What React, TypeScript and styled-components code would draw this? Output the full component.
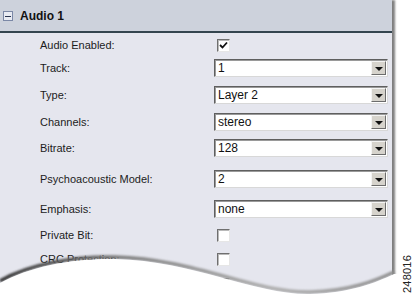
import React from 'react';
import styled, { createGlobalStyle } from 'styled-components';

const GlobalStyle = createGlobalStyle`
  html, body {
    margin: 0;
    padding: 0;
    background: #ffffff;
    font-family: 'Liberation Sans', Arial, sans-serif;
  }
`;

const Page = styled.div`
  position: relative;
  width: 413px;
  height: 297px;
  overflow: hidden;
  background: #ffffff;
`;

const Panel = styled.section`
  width: 392px;
  height: 297px;
  background: #e5e6ee;
  box-shadow: 3px 0 2px rgba(0, 0, 0, 0.5);
`;

const Header = styled.header`
  display: flex;
  align-items: center;
  gap: 7px;
  height: 31px;
  padding: 0 0 0 3px;
  background: #cdd2dc;
  border-bottom: 2px solid #34454f;
  box-sizing: content-box;
`;

const Toggle = styled.span`
  display: flex;
  align-items: center;
  justify-content: center;
  width: 8px;
  height: 8px;
  border: 1px solid #7b88a6;
  background: #e8ebf3;
  margin-top: 1px;

  &::before {
    content: '';
    width: 6px;
    height: 1px;
    background: #2a3550;
  }
`;

const Title = styled.h2`
  margin: 0;
  font-size: 12px;
  font-weight: bold;
  color: #111;
`;

const Fields = styled.div`
  display: flex;
  flex-direction: column;
`;

const Row = styled.div<{ $h: number }>`
  display: grid;
  grid-template-columns: 174px 174px;
  align-items: center;
  height: ${(p) => p.$h}px;
  padding-left: 40px;
`;

const Label = styled.span`
  font-size: 11px;
  color: #1c1c1c;
  white-space: nowrap;
`;

const Box = styled.span`
  display: flex;
  align-items: center;
  justify-content: center;
  width: 11px;
  height: 11px;
  margin-left: 3px;
  background: #ffffff;
  border-style: solid;
  border-width: 1px;
  border-color: #6f6f6f #e6e6e6 #e6e6e6 #6f6f6f;
  box-shadow: inset 1px 1px 0 #b9b9b9;
`;

const Select = styled.div`
  display: flex;
  align-items: stretch;
  width: 174px;
  height: 18px;
  box-sizing: border-box;
  background: #ffffff;
  border-style: solid;
  border-width: 1px;
  border-color: #5f5f5f #d8d8d8 #d8d8d8 #5f5f5f;
  box-shadow: inset 1px 1px 0 #9a9a9a;
`;

const Value = styled.span`
  flex: 1;
  display: flex;
  align-items: center;
  padding-left: 3px;
  font-size: 12px;
  color: #111;
`;

const Arrow = styled.span`
  display: flex;
  align-items: center;
  justify-content: center;
  width: 15px;
  margin: 1px 1px 1px 0;
  background: #d6d3cc;
  border-style: solid;
  border-width: 1px;
  border-color: #f4f4f4 #6c6c6c #6c6c6c #f4f4f4;
  box-sizing: border-box;

  &::before {
    content: '';
    border-left: 4px solid transparent;
    border-right: 4px solid transparent;
    border-top: 4px solid #111;
    margin-top: 1px;
  }
`;

const Tear = styled.svg`
  position: absolute;
  left: 0;
  bottom: 0;
`;

const FigureId = styled.span`
  position: absolute;
  left: 388px;
  top: 268px;
  font-size: 11px;
  color: #222;
  transform: rotate(-90deg);
  letter-spacing: 0.2px;
`;

type Field =
  | { label: string; h: number; kind: 'check'; checked?: boolean }
  | { label: string; h: number; kind: 'select'; value: string };

const fields: Field[] = [
  { label: 'Audio Enabled:', h: 24, kind: 'check', checked: true },
  { label: 'Track:', h: 22, kind: 'select', value: '1' },
  { label: 'Type:', h: 32, kind: 'select', value: 'Layer 2' },
  { label: 'Channels:', h: 22, kind: 'select', value: 'stereo' },
  { label: 'Bitrate:', h: 30, kind: 'select', value: '128' },
  { label: 'Psychoacoustic Model:', h: 32, kind: 'select', value: '2' },
  { label: 'Emphasis:', h: 28, kind: 'select', value: 'none' },
  { label: 'Private Bit:', h: 24, kind: 'check' },
  { label: 'CRC Protection:', h: 24, kind: 'check' },
  { label: 'Original:', h: 26, kind: 'check' },
];

const Check = () => (
  <svg width="9" height="9" viewBox="0 0 9 9">
    <path d="M1 4 L3.5 6.5 L8 1.5" fill="none" stroke="#111" strokeWidth="1.8" />
  </svg>
);

const App: React.FC = () => (
  <>
    <GlobalStyle />
    <Page>
      <Panel>
        <Header>
          <Toggle />
          <Title>Audio 1</Title>
        </Header>
        <Fields>
          {fields.map((f) => (
            <Row key={f.label} $h={f.h}>
              <Label>{f.label}</Label>
              {f.kind === 'check' ? (
                <Box>{f.checked ? <Check /> : null}</Box>
              ) : (
                <Select>
                  <Value>{f.value}</Value>
                  <Arrow />
                </Select>
              )}
            </Row>
          ))}
        </Fields>
      </Panel>
      <Tear width="413" height="50" viewBox="0 247 413 50">
        <defs>
          <linearGradient id="edge" x1="0" x2="1" y1="0" y2="0">
            <stop offset="0" stopColor="#333333" />
            <stop offset="0.3" stopColor="#7e7e7e" />
            <stop offset="0.7" stopColor="#b0b0b0" />
            <stop offset="1" stopColor="#8e8e8e" />
          </linearGradient>
          <filter id="soft" x="-5%" y="-50%" width="110%" height="200%">
            <feGaussianBlur stdDeviation="1.2" />
          </filter>
        </defs>
        <path
          d="M0 281 C 30 264 75 256 115 257 C 195 259 255 293 310 292 C 350 291 375 281 394 272"
          fill="none"
          stroke="url(#edge)"
          strokeWidth="3.5"
          filter="url(#soft)"
        />
        <path
          d="M0 283 C 30 266 75 258 115 259 C 195 261 255 295 310 294 C 350 293 375 283 394 274 L 413 274 L 413 297 L 0 297 Z"
          fill="#ffffff"
        />
      </Tear>
      <FigureId>248016</FigureId>
    </Page>
  </>
);

export default App;
